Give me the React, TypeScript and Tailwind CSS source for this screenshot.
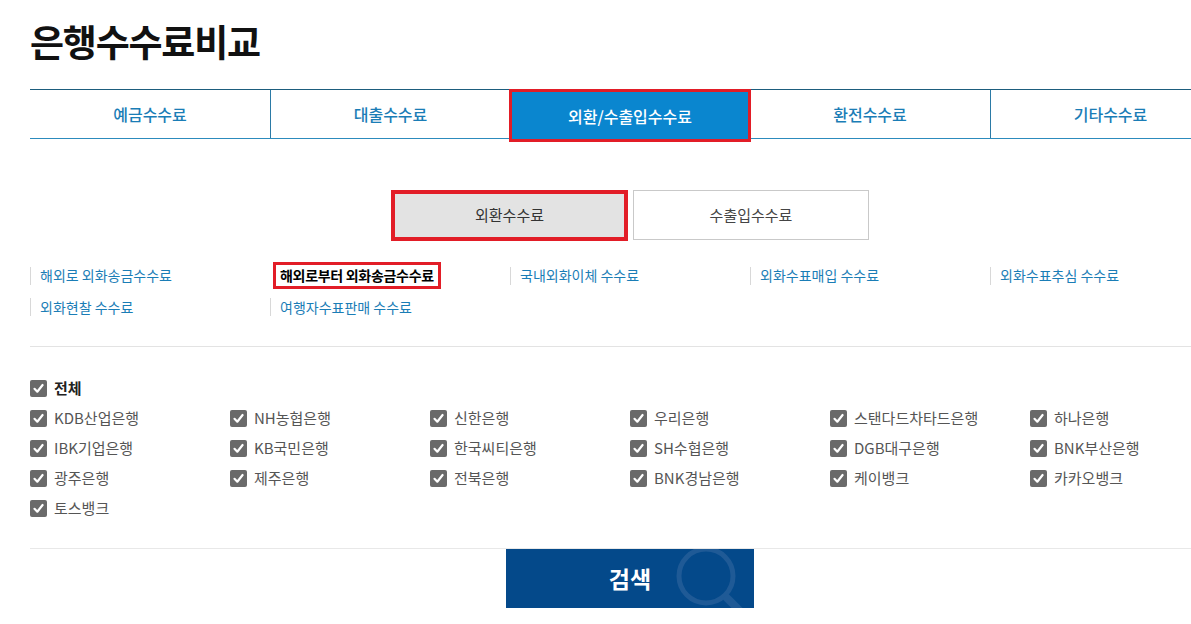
import React from 'react';

const FONT = { fontFamily: '"Noto Sans CJK KR", "Noto Sans", sans-serif' };

const tabs = ['예금수수료', '대출수수료', '외환/수출입수수료', '환전수수료', '기타수수료'];

const links: string[][] = [
  ['해외로 외화송금수수료', '해외로부터 외화송금수수료', '국내외화이체 수수료', '외화수표매입 수수료', '외화수표추심 수수료'],
  ['외화현찰 수수료', '여행자수표판매 수수료'],
];

const banks = [
  'KDB산업은행', 'NH농협은행', '신한은행', '우리은행', '스탠다드차타드은행', '하나은행',
  'IBK기업은행', 'KB국민은행', '한국씨티은행', 'SH수협은행', 'DGB대구은행', 'BNK부산은행',
  '광주은행', '제주은행', '전북은행', 'BNK경남은행', '케이뱅크', '카카오뱅크',
  '토스뱅크',
];

const CheckBox = () => (
  <span className="w-[17px] h-[17px] bg-[#6a6a6a] rounded-[2px] flex items-center justify-center shrink-0">
    <svg width="13" height="13" viewBox="0 0 13 13" fill="none">
      <path d="M2.5 6.8l2.8 2.9L10.6 3" stroke="white" strokeWidth="2.2" strokeLinecap="round" strokeLinejoin="round" />
    </svg>
  </span>
);

const CheckItem: React.FC<{ label: string; bold?: boolean }> = ({ label, bold }) => (
  <label className="flex items-center gap-[7px] h-[30px]">
    <CheckBox />
    <span className={`text-[15px] ${bold ? 'font-bold text-[#222]' : 'text-[#555]'}`}>{label}</span>
  </label>
);

export default function App() {
  return (
    <div className="w-[1191px] h-[624px] bg-white overflow-hidden" style={FONT}>
      <div className="w-[1200px] ml-[30px]">
        {/* Title */}
        <h1 className="text-[37px] font-bold text-[#111] leading-none pt-[23px] tracking-[-1.2px]">은행수수료비교</h1>

        {/* Main tabs */}
        <div className="mt-[29px] grid grid-cols-5 h-[50px] border-t border-b border-t-[#1d5d7d] border-b-[#2c8bbd]">
          {tabs.map((t, i) => (
            i === 2 ? (
              <div key={t} className="relative">
                <div className="absolute -top-[1px] left-[-1px] right-[-1px] h-[53px] bg-[#0a86cf] border-[3px] border-[#e21d27] flex items-center justify-center text-white text-[16px] font-medium">
                  {t}
                </div>
              </div>
            ) : (
              <div
                key={t}
                className={`flex items-center justify-center text-[16px] font-medium text-[#1a7db6] ${i === 1 || i === 4 ? 'border-l border-[#2b7aa6]' : ''}`}
              >
                {t}
              </div>
            )
          ))}
        </div>

        {/* Sub tabs */}
        <div className="mt-[51px] flex justify-center gap-[5px]">
          <button className="w-[237px] h-[51px] bg-[#e3e3e3] border-[4px] border-[#e21d27] text-[15px] text-[#333]">외환수수료</button>
          <button className="w-[236px] h-[50px] bg-white border border-[#c9c9c9] text-[15px] text-[#444]">수출입수수료</button>
        </div>

        {/* Sub links */}
        <div className="mt-[21px] flex flex-col gap-[6px]">
          {links.map((row, r) => (
            <div key={r} className="grid grid-cols-5 h-[26px]">
              {row.map((l) =>
                l === '해외로부터 외화송금수수료' ? (
                  <div key={l} className="flex items-center">
                    <span className="ml-[3px] h-[27px] px-[4px] border-[3px] border-[#e21d27] bg-white flex items-center text-[14px] font-bold text-black tracking-[-0.3px]">
                      {l}
                    </span>
                  </div>
                ) : (
                  <div key={l} className="flex items-center">
                    <span className="w-px h-[18px] bg-[#d8d8d8]" />
                    <span className="ml-[9px] text-[14px] text-[#1a7db6]">{l}</span>
                  </div>
                )
              )}
            </div>
          ))}
        </div>

        {/* Divider */}
        <div className="mt-[26px] h-px bg-[#e3e3e3] w-[1161px]" />

        {/* Bank checkboxes */}
        <div className="mt-[26px]">
          <CheckItem label="전체" bold />
          <div className="grid grid-cols-6 w-[1200px]">
            {banks.map((b) => (
              <CheckItem key={b} label={b} />
            ))}
          </div>
        </div>

        {/* Divider */}
        <div className="mt-[25px] h-px bg-[#e8e8e8] w-[1161px]" />

        {/* Search button */}
        <div className="flex justify-center">
          <button className="relative w-[248px] h-[59px] bg-[#04498a] overflow-hidden flex items-center justify-center">
            <svg className="absolute left-[150px] top-0" width="98" height="59" viewBox="0 0 98 59" fill="none">
              <circle cx="50" cy="27" r="27" stroke="#1f5a96" strokeWidth="5" />
              <path d="M69 47 L100 78" stroke="#1f5a96" strokeWidth="8" />
            </svg>
            <span className="relative text-white text-[23px] font-bold">검색</span>
          </button>
        </div>
      </div>
    </div>
  );
}
